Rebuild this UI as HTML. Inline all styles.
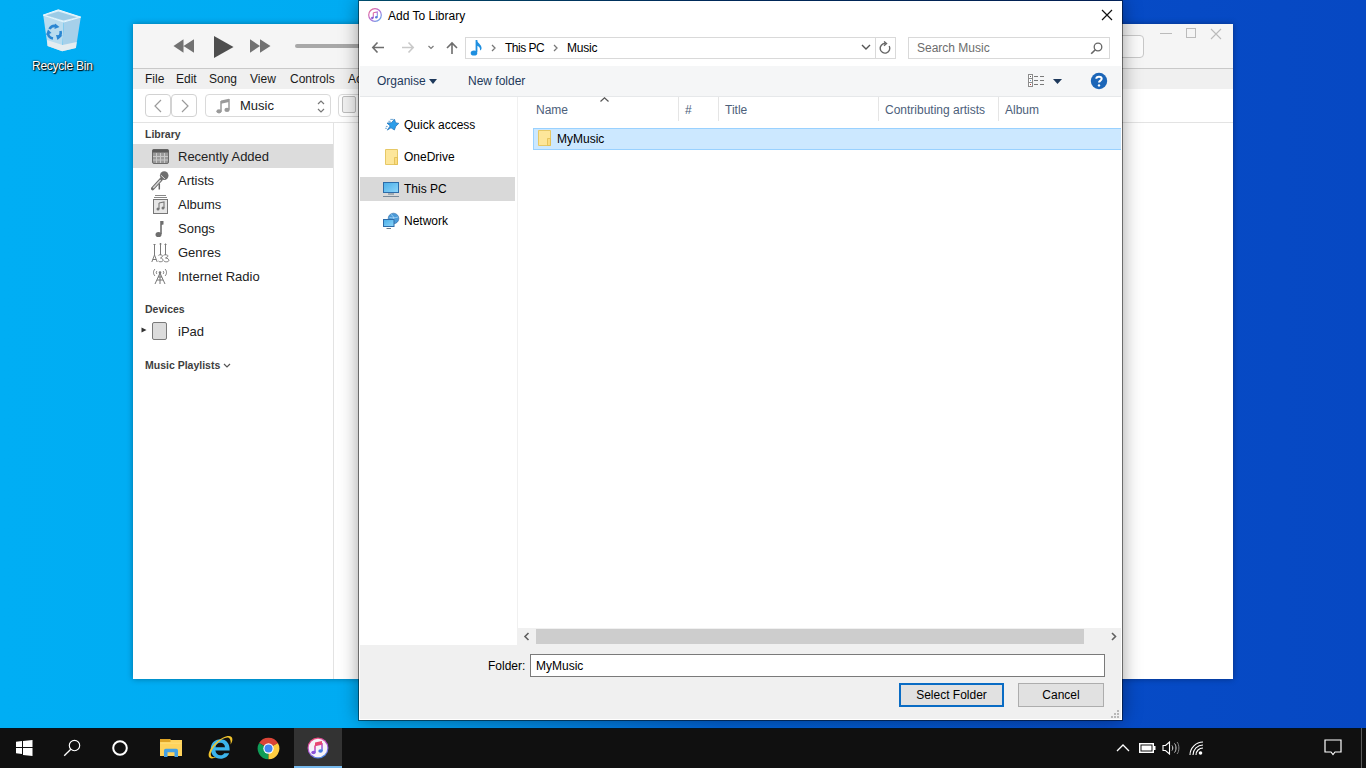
<!DOCTYPE html>
<html><head><meta charset="utf-8">
<style>
*{margin:0;padding:0;box-sizing:border-box}
html,body{width:1366px;height:768px;overflow:hidden}
body{position:relative;font-family:"Liberation Sans",sans-serif;font-size:12px;color:#000;
background:linear-gradient(90deg,#00aef4 0px,#00abf2 365px,#0062d4 720px,#064bc6 1110px,#0648c3 1366px)}
.a{position:absolute}
.t{position:absolute;white-space:nowrap;line-height:16px}
/* itunes */
#it{left:133px;top:24px;width:1100px;height:655px;background:#fff;box-shadow:0 0 6px rgba(0,0,0,.35)}
#dsh{left:359px;top:1px;width:763px;height:719px;background:#f0f0f0;box-shadow:0 0 0 1px rgba(0,0,0,.48),0 0 18px rgba(0,0,0,.4)}
#dlg{left:358px;top:0;width:765px;height:721px}
#tb{left:0;top:728px;width:1366px;height:40px;background:#101010}
</style></head><body>

<!-- recycle bin -->
<svg class="a" style="left:40px;top:8px" width="44" height="46" viewBox="40 8 44 46">
 <path d="M43.2 15.1L47.6 45.9L62.2 51.3L63.7 22Z" fill="#b9dcef"/>
 <path d="M63.7 22L62.2 51.3L75.9 47.9L80.8 17.1Z" fill="#a6d0ea"/>
 <path d="M47 40L47.6 45.9L62.2 51.3L75.9 47.9L76.7 42L62.5 45Z" fill="#e4ecf0"/>
 <path d="M43.2 15.1L58.3 9.8L80.8 17.1L63.7 22Z" fill="#d8eef9" stroke="#eaf7fd" stroke-width="1"/>
 <path d="M46 15.3L58.3 11.5L77 17.2L63.5 20.5Z" fill="#9ccbe6"/>
 <g fill="none" stroke="#2a86d2" stroke-width="2.6">
  <path d="M49.5 29A6 6 0 0 1 56 26"/>
  <path d="M60.5 31A6 6 0 0 1 58 37.5"/>
  <path d="M53 38.5A6 6 0 0 1 48 33"/>
 </g>
 <g fill="#2a86d2">
  <path d="M55 23.5L59.5 27L54.5 29Z"/>
  <path d="M62.5 35.5L57.5 40L56 35Z"/>
  <path d="M46 35L48 29.5L51.5 33Z"/>
 </g>
</svg>
<div class="t" style="left:32px;top:58px;letter-spacing:-0.25px;color:#fff;text-shadow:0 0 2px #000,1px 1px 1px #000">Recycle Bin</div>

<!-- iTunes window -->
<div id="it" class="a">
 <div class="a" style="left:0;top:0;width:1100px;height:45px;background:#f5f5f5;border-bottom:1px solid #c9c9c9"></div>
 <div class="a" style="left:0;top:45px;width:1100px;height:20px;background:#f0f0f0"></div>
 <div class="a" style="left:0;top:98px;width:1100px;height:1px;background:#e3e3e3"></div>
 <div class="a" style="left:200px;top:99px;width:1px;height:556px;background:#e3e3e3"></div>
 <!-- transport -->
 <svg class="a" style="left:40px;top:10px" width="100" height="26" viewBox="0 0 100 26">
  <path d="M10.5 12 L21 5.3 L21 18.7 Z M0.5 12 L10.5 5.3 L10.5 18.7 Z" fill="#727272"/>
  <path d="M41 2 L60.5 13 L41 24 Z" fill="#4e4e4e"/>
  <path d="M77 5.3 L87 12 L77 18.7 Z M87 5.3 L97.5 12 L87 18.7 Z" fill="#727272"/>
 </svg>
 <div class="a" style="left:162px;top:20px;width:80px;height:4px;border-radius:2px;background:#a8a8a8"></div>
 <!-- window controls -->
 <div class="a" style="left:1027px;top:9px;width:12px;height:1px;background:#bbb"></div>
 <div class="a" style="left:1053px;top:4px;width:10px;height:10px;border:1px solid #bbb"></div>
 <svg class="a" style="left:1077px;top:4px" width="12" height="12" viewBox="0 0 12 12"><path d="M1 1L11 11M11 1L1 11" stroke="#bbb" stroke-width="1.1"/></svg>
 <div class="a" style="left:940px;top:11px;width:71px;height:23px;border:1px solid #c8c8c8;border-radius:4px;background:#fbfbfb"></div>
 <!-- menu -->
 <div class="t" style="left:12px;top:47px;font-size:12px;color:#1a1a1a">File</div>
 <div class="t" style="left:43px;top:47px;font-size:12px;color:#1a1a1a">Edit</div>
 <div class="t" style="left:76px;top:47px;font-size:12px;color:#1a1a1a">Song</div>
 <div class="t" style="left:117px;top:47px;font-size:12px;color:#1a1a1a">View</div>
 <div class="t" style="left:157px;top:47px;font-size:12px;color:#1a1a1a">Controls</div>
 <div class="t" style="left:215px;top:47px;font-size:12px;color:#1a1a1a">Account</div>
 <!-- toolbar -->
 <div class="a" style="left:12px;top:70px;width:26px;height:23px;border:1px solid #d2d2d2;border-radius:4px;background:#fff"></div>
 <div class="a" style="left:38px;top:70px;width:26px;height:23px;border:1px solid #d2d2d2;border-radius:4px;background:#fff"></div>
 <svg class="a" style="left:20px;top:75px" width="50" height="14" viewBox="0 0 50 14"><path d="M8 1L2 7L8 13" fill="none" stroke="#9a9a9a" stroke-width="1.2"/><path d="M29 1L35 7L29 13" fill="none" stroke="#9a9a9a" stroke-width="1.2"/></svg>
 <div class="a" style="left:72px;top:70px;width:126px;height:23px;border:1px solid #dadada;border-radius:4px;background:#fff"></div>
 <svg class="a" style="left:83px;top:74px" width="14" height="16" viewBox="0 0 14 16"><path d="M5 2.5 L13 0.8 V4 L5 5.7Z" fill="#9a9a9a"/><path d="M5 3 V13.2 M13 1 V11.8" stroke="#9a9a9a" stroke-width="1.5"/><ellipse cx="3" cy="13.3" rx="2.6" ry="2.1" fill="#9a9a9a"/><ellipse cx="11" cy="11.9" rx="2.6" ry="2.1" fill="#9a9a9a"/></svg>
 <div class="t" style="left:107px;top:74px;font-size:13px;color:#222">Music</div>
 <svg class="a" style="left:184px;top:75px" width="8" height="15" viewBox="0 0 8 15"><path d="M1 5L4 2L7 5M1 10L4 13L7 10" fill="none" stroke="#777" stroke-width="1.2"/></svg>
 <div class="a" style="left:205px;top:70px;width:30px;height:23px;border:1px solid #dadada;border-radius:4px;background:#fff"></div>
 <div class="a" style="left:209px;top:72px;width:14px;height:17px;border:1px solid #bdbdbd;border-radius:2px;background:#f2f2f2"></div>
 <!-- sidebar -->
 <div class="t" style="left:12px;top:102px;font-size:10.5px;font-weight:bold;color:#3e3e3e">Library</div>
 <div class="a" style="left:0;top:120px;width:200px;height:24px;background:#dcdcdc"></div>
 <div class="t" style="left:45px;top:125px;font-size:13px;color:#222">Recently Added</div>
 <div class="t" style="left:45px;top:149px;font-size:13px;color:#222">Artists</div>
 <div class="t" style="left:45px;top:173px;font-size:13px;color:#222">Albums</div>
 <div class="t" style="left:45px;top:197px;font-size:13px;color:#222">Songs</div>
 <div class="t" style="left:45px;top:221px;font-size:13px;color:#222">Genres</div>
 <div class="t" style="left:45px;top:245px;font-size:13px;color:#222">Internet Radio</div>
 <div class="t" style="left:12px;top:277px;font-size:10.5px;font-weight:bold;color:#3e3e3e">Devices</div>
 <div class="t" style="left:45px;top:300px;font-size:13px;color:#222">iPad</div>
 <div class="t" style="left:12px;top:333px;font-size:10.5px;font-weight:bold;color:#3e3e3e">Music Playlists</div>
 <!-- sidebar icons -->
 <svg class="a" style="left:19px;top:125px" width="17" height="15" viewBox="0 0 17 15">
  <rect x="0.5" y="0.5" width="16" height="14" rx="1.5" fill="#9a9a9a" stroke="#6a6a6a"/>
  <rect x="0.5" y="0.5" width="16" height="3" fill="#5a5a5a"/>
  <path d="M1 7.5H16M1 11H16M4.5 4V14M8.5 4V14M12.5 4V14" stroke="#c8c8c8" stroke-width="1"/>
 </svg>
 <svg class="a" style="left:18px;top:144px" width="19" height="23" viewBox="0 0 19 23">
  <path d="M8.3 15.5V21.5" stroke="#6a6a6a" stroke-width="1.5"/>
  <path d="M10 11.5L1.6 20.6" stroke="#6e6e6e" stroke-width="3.4" stroke-linecap="round"/>
  <path d="M9.6 12L2.2 20" stroke="#d8d8d8" stroke-width="1.4"/>
  <circle cx="13.2" cy="7.6" r="4.3" fill="#6e6e6e"/>
  <path d="M9.8 7.1L13.9 10.9" stroke="#e8e8e8" stroke-width="0.9"/>
 </svg>
 <svg class="a" style="left:20px;top:170px" width="15" height="20" viewBox="0 0 15 20">
  <path d="M2 1.5H13M1 3.5H14" stroke="#888" stroke-width="1"/>
  <rect x="0.5" y="5.5" width="14" height="14" fill="#e6e6e6" stroke="#777"/>
  <path d="M6 9L11 8V14" fill="none" stroke="#777" stroke-width="1.1"/><path d="M6 9V15" stroke="#777" stroke-width="1.1"/>
  <circle cx="5" cy="15" r="1.5" fill="#777"/><circle cx="10" cy="14" r="1.5" fill="#777"/>
 </svg>
 <svg class="a" style="left:21px;top:196px" width="10" height="18" viewBox="0 0 10 18">
  <path d="M7 1V14" stroke="#6e6e6e" stroke-width="1.6"/>
  <path d="M7 1H9.5V4.5L7 5Z" fill="#6e6e6e"/>
  <ellipse cx="4.5" cy="14.5" rx="3" ry="2.6" fill="#6e6e6e"/>
 </svg>
 <svg class="a" style="left:18px;top:219px" width="19" height="20" viewBox="0 0 19 20">
  <g stroke="#7a7a7a" stroke-width="1" fill="none">
  <path d="M3.5 1V12M9.5 0V12M14.5 0.5V12"/>
  <path d="M2.5 1.5H4.5M8.5 1H10.5M13.5 1.5H15.5"/>
  <path d="M0.8 19L3.5 12L6.2 19M1.8 16.5H5.2"/>
  <path d="M7.5 12.5C7.5 11.5 11.5 11.5 11.5 13C11.5 14 10 14.5 9.5 15C11.5 15 12 16.5 12 17.5C12 19 7.5 19.2 7.5 17.8"/>
  <path d="M12.5 12.5C12.5 11.5 17 11.5 17 13C17 14 15 14.5 14.5 15C17 15 17.8 16.5 17.8 17.5C17.8 19.2 13 19.2 13 17.8"/>
  </g>
 </svg>
 <svg class="a" style="left:19px;top:243px" width="16" height="18" viewBox="0 0 16 18">
  <g stroke="#777" stroke-width="1" fill="none">
  <path d="M3 2C1 4 1 7 3 9M13 2C15 4 15 7 13 9M5 4C4 5 4 6 5 7M11 4C12 5 12 6 11 7"/>
  <path d="M8 5V17M8 6L3 17M8 6L13 17M5 13H11M6 10H10"/>
  </g>
  <circle cx="8" cy="5.5" r="1.3" fill="#777"/>
 </svg>
 <svg class="a" style="left:8px;top:303px" width="6" height="6" viewBox="0 0 6 6"><path d="M0.5 0.5L5.5 3L0.5 5.5Z" fill="#333"/></svg>
 <div class="a" style="left:19px;top:298px;width:15px;height:18px;border:1px solid #7a7a7a;border-radius:2px;background:#dcdcdc"></div>
 <svg class="a" style="left:90px;top:339px" width="8" height="6" viewBox="0 0 8 6"><path d="M1 1L4 4L7 1" fill="none" stroke="#555" stroke-width="1.2"/></svg>
</div>

<!-- dialog -->
<div id="dsh" class="a"></div>
<div id="dlg" class="a">
 <!-- white top area -->
 <div class="a" style="left:1px;top:1px;width:763px;height:65px;background:#fff"></div>
 <!-- title -->
 <svg class="a" style="left:10px;top:8px" width="14" height="14" viewBox="0 0 14 14">
  <defs><linearGradient id="ig" x1="0" y1="0" x2="1" y2="1"><stop offset="0" stop-color="#f06a8a"/><stop offset="0.5" stop-color="#b36ad8"/><stop offset="1" stop-color="#58b4ea"/></linearGradient></defs>
  <circle cx="7" cy="7" r="6.3" fill="#fff" stroke="url(#ig)" stroke-width="1.2"/>
  <path d="M5.3 4.8L9.3 3.9V9.2M5.3 4.8V10" fill="none" stroke="url(#ig)" stroke-width="1.1"/>
  <circle cx="4.3" cy="10" r="1.2" fill="#8a5ad0"/><circle cx="8.3" cy="9.2" r="1.2" fill="#5a7ad8"/>
 </svg>
 <div class="t" style="left:30px;top:8px;font-size:12px;color:#000">Add To Library</div>
 <svg class="a" style="left:743px;top:9px" width="12" height="12" viewBox="0 0 12 12"><path d="M1 1L11 11M11 1L1 11" stroke="#111" stroke-width="1.2"/></svg>
 <!-- nav -->
 <svg class="a" style="left:13px;top:40px" width="100" height="14" viewBox="0 0 100 14">
  <path d="M1.8 7.5H13M6.5 2.5L1.8 7.5L6.5 12.5" fill="none" stroke="#6d6d6d" stroke-width="1.6"/>
  <path d="M31 7.5H42.2M37.5 2.5L42.2 7.5L37.5 12.5" fill="none" stroke="#c9c9c9" stroke-width="1.6"/>
  <path d="M57.5 6L60 8.5L62.5 6" fill="none" stroke="#7a7a7a" stroke-width="1.2"/>
  <path d="M81 3V14M76 8L81 3L86 8" fill="none" stroke="#6d6d6d" stroke-width="1.6"/>
 </svg>
 <div class="a" style="left:107px;top:37px;width:431px;height:22px;border:1px solid #d9d9d9;background:#fff"></div>
 <div class="a" style="left:517px;top:38px;width:1px;height:20px;background:#d9d9d9"></div>
 <svg class="a" style="left:112px;top:39px" width="14" height="18" viewBox="0 0 14 18">
  <path d="M6.5 1V13" stroke="#1e8fe0" stroke-width="1.8"/>
  <path d="M6.5 1C7.5 4 11 5 11.5 8.5C11.8 10 11 11 10 11.5C10.5 9 9 7 6.5 6.5Z" fill="#1e8fe0"/>
  <ellipse cx="4" cy="14" rx="3.3" ry="2.6" fill="#1e8fe0"/>
 </svg>
 <svg class="a" style="left:133px;top:44px" width="200" height="8" viewBox="0 0 200 8"><path d="M1 1L4 4L1 7M63 1L66 4L63 7" fill="none" stroke="#777" stroke-width="1.3"/></svg>
 <div class="t" style="left:147px;top:40px;font-size:12px;color:#000;letter-spacing:-0.5px">This PC</div>
 <div class="t" style="left:209px;top:40px;font-size:12px;color:#000;letter-spacing:-0.2px">Music</div>
 <svg class="a" style="left:503px;top:44px" width="10" height="7" viewBox="0 0 10 7"><path d="M1 1L5 5L9 1" fill="none" stroke="#555" stroke-width="1.4"/></svg>
 <svg class="a" style="left:520px;top:41px" width="14" height="14" viewBox="0 0 14 14"><path d="M7 2.5A4.8 4.8 0 1 0 11.2 5" fill="none" stroke="#666" stroke-width="1.4"/><path d="M6 0.5L8.5 2.6L6 4.8" fill="none" stroke="#666" stroke-width="1.4"/></svg>
 <div class="a" style="left:550px;top:37px;width:202px;height:22px;border:1px solid #d9d9d9;background:#fff"></div>
 <div class="t" style="left:559px;top:40px;font-size:12px;color:#6d6d6d">Search Music</div>
 <svg class="a" style="left:732px;top:42px" width="13" height="13" viewBox="0 0 13 13"><circle cx="8" cy="5" r="3.8" fill="none" stroke="#666" stroke-width="1.3"/><path d="M5.3 7.7L1.2 11.8" stroke="#666" stroke-width="1.6"/></svg>
 <!-- command bar -->
 <div class="a" style="left:2px;top:66px;width:761px;height:30px;background:#f5f6f7"></div>
 <div class="a" style="left:2px;top:96px;width:761px;height:1px;background:#e6e8ea"></div>
 <div class="t" style="left:19px;top:73px;font-size:12px;color:#1e395b">Organise</div>
 <svg class="a" style="left:71px;top:79px" width="8" height="5" viewBox="0 0 8 5"><path d="M0 0H8L4 5Z" fill="#1e395b"/></svg>
 <div class="t" style="left:110px;top:73px;font-size:12px;color:#1e395b">New folder</div>
 <svg class="a" style="left:669px;top:73px" width="19" height="15" viewBox="0 0 19 15">
  <rect x="1.5" y="1.5" width="4" height="12" fill="#fff" stroke="#8c8c8c"/>
  <path d="M1.5 5.5H5.5M1.5 9.5H5.5" stroke="#8c8c8c"/>
  <rect x="3" y="3" width="1" height="1" fill="#555"/><rect x="3" y="7" width="1" height="1" fill="#6a9ac8"/><rect x="3" y="11" width="1" height="1" fill="#b04040"/>
  <path d="M7 3.5H11M13 3.5H17M7 7.5H11M13 7.5H17M7 11.5H11M13 11.5H17" stroke="#7a7a7a" stroke-width="1.1"/>
 </svg>
 <svg class="a" style="left:695px;top:79px" width="9" height="5" viewBox="0 0 9 5"><path d="M0 0H9L4.5 5Z" fill="#1e395b"/></svg>
 <svg class="a" style="left:732px;top:72px" width="18" height="18" viewBox="0 0 18 18"><circle cx="9" cy="9" r="8.2" fill="#1c66b8"/><path d="M6.3 6.8C6.3 4.2 11.7 4.2 11.7 6.8C11.7 8.6 9 8.6 9 10.6" fill="none" stroke="#fff" stroke-width="2"/><circle cx="9" cy="13.4" r="1.2" fill="#fff"/></svg>
 <!-- nav pane -->
 <div class="a" style="left:1px;top:97px;width:158px;height:548px;background:#fff"></div>
 <div class="a" style="left:1px;top:177px;width:156px;height:24px;background:#d9d9d9"></div>
 <div class="t" style="left:46px;top:117px;font-size:12px;color:#000">Quick access</div>
 <div class="t" style="left:46px;top:149px;font-size:12px;color:#000">OneDrive</div>
 <div class="t" style="left:46px;top:181px;font-size:12px;color:#000">This PC</div>
 <div class="t" style="left:46px;top:213px;font-size:12px;color:#000">Network</div>
 <svg class="a" style="left:22px;top:112px" width="24" height="24" viewBox="380 112 24 24">
  <path d="M394.5 119.3L395.6 122.7L398.8 123.4L395.8 126.2L394.4 130L391 127.8L387.3 130.1L390.2 125.9L387 123.1L391.4 122.7Z" fill="#2c9de9" stroke="#1d6fb8" stroke-width="0.7" stroke-linejoin="round"/>
  <path d="M390.3 119.4H393.6M388.4 121.3H390.6M385.9 126.4H387.6M385.2 128.3H386.9" stroke="#4a90c8" stroke-width="0.8"/>
 </svg>
 <svg class="a" style="left:27px;top:149px" width="14" height="17" viewBox="0 0 14 17"><path d="M0.5 0.5H12.5V15.5H0.5Z" fill="#fde69a" stroke="#e6c866"/><path d="M9.5 8.5H12.5V15.5H9.5Z" fill="#fbdc80" stroke="#e0bc50" stroke-width="0.8"/></svg>
 <svg class="a" style="left:24px;top:181px" width="18" height="17" viewBox="0 0 18 17">
  <defs><linearGradient id="scr" x1="0" y1="0" x2="1" y2="1"><stop offset="0" stop-color="#4aaee8"/><stop offset="1" stop-color="#8ed6fa"/></linearGradient></defs>
  <rect x="1.5" y="1.5" width="15" height="10" fill="url(#scr)" stroke="#2d6ca8"/>
  <path d="M6 13H12" stroke="#6a7a88" stroke-width="1"/><path d="M1 15.5H17" stroke="#7a8a98" stroke-width="1"/>
 </svg>
 <svg class="a" style="left:24px;top:212px" width="18" height="18" viewBox="0 0 18 18">
  <circle cx="11.5" cy="6.5" r="5.3" fill="#4a9ad8" stroke="#2d6ca8" stroke-width="0.6"/>
  <path d="M9 2.5C11 3.5 12.5 5.5 11.5 9.5M7.5 5.5C9.5 6 13 6 16 5" stroke="#b8e0fa" stroke-width="0.7" fill="none"/>
  <rect x="1.5" y="7.5" width="10.5" height="7" fill="url(#scr)" stroke="#2d6ca8"/>
  <path d="M4.5 16.5H9" stroke="#6a7a88" stroke-width="1"/>
 </svg>
 <div class="a" style="left:159px;top:97px;width:1px;height:548px;background:#f0f0f0"></div>
 <!-- content -->
 <div class="a" style="left:160px;top:97px;width:603px;height:531px;background:#fff"></div>
 <div class="t" style="left:178px;top:102px;font-size:12px;color:#4c607a">Name</div>
 <svg class="a" style="left:242px;top:97px" width="9" height="5" viewBox="0 0 9 5"><path d="M0.5 4.5L4.5 0.8L8.5 4.5" fill="none" stroke="#555" stroke-width="1.2"/></svg>
 <div class="a" style="left:320px;top:97px;width:1px;height:24px;background:#e5e5e5"></div>
 <div class="t" style="left:327px;top:102px;font-size:12px;color:#4c607a">#</div>
 <div class="a" style="left:360px;top:97px;width:1px;height:24px;background:#e5e5e5"></div>
 <div class="t" style="left:367px;top:102px;font-size:12px;color:#4c607a">Title</div>
 <div class="a" style="left:520px;top:97px;width:1px;height:24px;background:#e5e5e5"></div>
 <div class="t" style="left:527px;top:102px;font-size:12px;color:#4c607a">Contributing artists</div>
 <div class="a" style="left:640px;top:97px;width:1px;height:24px;background:#e5e5e5"></div>
 <div class="t" style="left:647px;top:102px;font-size:12px;color:#4c607a">Album</div>
 <div class="a" style="left:175px;top:128px;width:588px;height:22px;background:#cce8ff;border:1px solid #99d1ff;border-right:0"></div>
 <svg class="a" style="left:180px;top:130px" width="14" height="17" viewBox="0 0 14 17"><path d="M0.5 0.5H12.5V15.5H0.5Z" fill="#fde69a" stroke="#e6c866"/><path d="M9.5 8.5H12.5V15.5H9.5Z" fill="#fbdc80" stroke="#e0bc50" stroke-width="0.8"/></svg>
 <div class="t" style="left:199px;top:131px;font-size:12px;color:#000">MyMusic</div>
 <!-- hscroll -->
 <div class="a" style="left:160px;top:628px;width:603px;height:17px;background:#f0f0f0"></div>
 <div class="a" style="left:178px;top:629px;width:548px;height:15px;background:#cdcdcd"></div>
 <svg class="a" style="left:165px;top:632px" width="8" height="9" viewBox="0 0 8 9"><path d="M5.5 1L2 4.5L5.5 8" fill="none" stroke="#606060" stroke-width="1.6"/></svg>
 <svg class="a" style="left:752px;top:632px" width="8" height="9" viewBox="0 0 8 9"><path d="M2 1L5.5 4.5L2 8" fill="none" stroke="#606060" stroke-width="1.6"/></svg>
 <!-- bottom -->
 <div class="t" style="left:130px;top:658px;font-size:12px;color:#000">Folder:</div>
 <div class="a" style="left:172px;top:654px;width:575px;height:23px;border:1px solid #7a7a7a;background:#fff"></div>
 <div class="t" style="left:178px;top:658px;font-size:12px;color:#000">MyMusic</div>
 <div class="a" style="left:541px;top:683px;width:105px;height:24px;border:2px solid #0a6cc4;background:#e1e1e1"></div>
 <div class="t" style="left:541px;top:687px;width:105px;text-align:center;font-size:12px;color:#000">Select Folder</div>
 <div class="a" style="left:660px;top:683px;width:86px;height:24px;border:1px solid #adadad;background:#e1e1e1"></div>
 <div class="t" style="left:660px;top:687px;width:86px;text-align:center;font-size:12px;color:#000">Cancel</div>
 <svg class="a" style="left:752px;top:709px" width="10" height="10" viewBox="0 0 10 10"><g fill="#b8b8b8"><rect x="7" y="1" width="2" height="2"/><rect x="4" y="4" width="2" height="2"/><rect x="7" y="4" width="2" height="2"/><rect x="1" y="7" width="2" height="2"/><rect x="4" y="7" width="2" height="2"/><rect x="7" y="7" width="2" height="2"/></g></svg>
 <div class="a" style="left:763px;top:1px;width:1px;height:719px;background:#fff"></div>
 <div class="a" style="left:1px;top:719px;width:763px;height:1px;background:#fff"></div>
 <div class="a" style="left:1px;top:66px;width:1px;height:654px;background:#fff"></div>
</div>

<!-- taskbar -->
<div id="tb" class="a">
 <div class="a" style="left:0;top:0;width:1366px;height:1px;background:#02121e"></div>
 <svg class="a" style="left:16px;top:12px" width="17" height="16" viewBox="0 0 17 16"><path d="M0 1.8L6 1.1V7H0Z M7 1L16.5 0V7H7Z M0 8H6V14L0 13.3Z M7 8H16.5V16L7 15Z" fill="#fff"/></svg>
 <svg class="a" style="left:63px;top:11px" width="18" height="18" viewBox="0 0 18 18"><circle cx="11.5" cy="6.5" r="5.2" fill="none" stroke="#fff" stroke-width="1.15"/><path d="M7.8 10.2L1.2 16.8" stroke="#fff" stroke-width="1.3"/></svg>
 <svg class="a" style="left:111px;top:11px" width="18" height="18" viewBox="0 0 18 18"><circle cx="9" cy="9" r="6.8" fill="none" stroke="#fff" stroke-width="2"/></svg>
 <svg class="a" style="left:159px;top:10px" width="24" height="20" viewBox="159 738 24 20">
  <path d="M160 739H170L171 740H182V756H160Z" fill="#ffd35c"/>
  <path d="M160 739H169.5L170.5 740.5V742H160Z" fill="#e0a526"/>
  <path d="M160.5 742.5H181.5V744H160.5Z" fill="#ffe07a" opacity=".6"/>
  <path d="M164 757V750.5Q164 748.8 165.7 748.8H176.3Q178 748.8 178 750.5V757H174.5V752.2H167.5V757Z" fill="#44a0e4"/>
 </svg>
 <svg class="a" style="left:207px;top:7px" width="26" height="25" viewBox="0 0 26 25">
  <g transform="translate(13.5 14) scale(1.22) translate(-12.5 -14)">
  <path d="M12.5 6C7.5 6 4.5 9.5 4.5 14C4.5 18.5 7.8 22 12.5 22C16 22 18.5 20.2 19.6 17.5H15.5C14.8 18.7 13.8 19.2 12.5 19.2C10.4 19.2 8.6 17.8 8.3 15.3H20C20.3 9.8 17.5 6 12.5 6ZM8.4 12.5C8.8 10.3 10.4 8.9 12.4 8.9C14.5 8.9 16 10.3 16.2 12.5Z" fill="#3cb4ec"/>
  </g>
  <path d="M2.5 22.5C0 20 3 13 9 7.5C15 2 22 -0.5 24.5 2C26 3.5 25.5 6.5 23.5 9.5C24 6.5 23.5 4 22 3C19.5 1.5 14.5 4 10 8.5C5 13.5 2.5 19 4.5 21.5C5.5 22.5 7.5 22.5 9.5 21.8C6.8 23.5 4 24 2.5 22.5Z" fill="#f2c42c"/>
 </svg>
 <svg class="a" style="left:257px;top:9px" width="23" height="23" viewBox="0 0 24 24">
  <path d="M12 12L21.79 6.35A11.3 11.3 0 0 0 2.21 6.35Z" fill="#db4437"/>
  <path d="M12 12L2.21 6.35A11.3 11.3 0 0 0 12 23.3Z" fill="#0f9d58"/>
  <path d="M12 12L12 23.3A11.3 11.3 0 0 0 21.79 6.35Z" fill="#ffcd40"/>
  <path d="M12 7.2H21.3L20.4 5.5L12 6Z" fill="#db4437"/>
  <circle cx="12" cy="12" r="5.4" fill="#fff"/><circle cx="12" cy="12" r="4.2" fill="#4285f4"/>
 </svg>
 <div class="a" style="left:294px;top:0;width:48px;height:40px;background:#333"></div>
 <div class="a" style="left:294px;top:38px;width:48px;height:2px;background:#76b9ed"></div>
 <svg class="a" style="left:307px;top:9px" width="22" height="22" viewBox="0 0 22 22">
  <defs><linearGradient id="ig2" x1="0.3" y1="0" x2="0.7" y2="1"><stop offset="0" stop-color="#f4486e"/><stop offset="0.5" stop-color="#b054d8"/><stop offset="1" stop-color="#3e8ee8"/></linearGradient></defs>
  <circle cx="11" cy="11" r="10.5" fill="url(#ig2)"/><circle cx="11" cy="11" r="9.3" fill="#f6f4f8"/>
  <path d="M8 8.5L15 7V14M8 8.5V15.5" fill="none" stroke="url(#ig2)" stroke-width="1.6"/>
  <path d="M8 5.5L15 4V7L8 8.5Z" fill="#e84870"/>
  <ellipse cx="6.5" cy="15.5" rx="2.2" ry="1.8" fill="#8a52d8"/><ellipse cx="13.5" cy="14" rx="2.2" ry="1.8" fill="#4a7ae0"/>
 </svg>
 <svg class="a" style="left:1116px;top:15px" width="14" height="9" viewBox="0 0 14 9"><path d="M1 8L7 2L13 8" fill="none" stroke="#fff" stroke-width="1.3"/></svg>
 <svg class="a" style="left:1139px;top:15px" width="17" height="10" viewBox="0 0 17 10"><rect x="0.75" y="0.75" width="13.5" height="8.5" fill="none" stroke="#fff" stroke-width="1.5"/><rect x="2.5" y="2.5" width="10" height="5" fill="#fff"/><rect x="14.5" y="3" width="2" height="4" fill="#fff"/></svg>
 <svg class="a" style="left:1162px;top:13px" width="18" height="14" viewBox="0 0 18 14"><path d="M1 4.5H3.5L7.5 1V13L3.5 9.5H1Z" fill="none" stroke="#fff" stroke-width="1.1"/><path d="M10 4.5C11 5.5 11 8.5 10 9.5M12.5 2.5C14.5 4.5 14.5 9.5 12.5 11.5" fill="none" stroke="#ddd" stroke-width="1"/><path d="M15 1C17.5 3.5 17.5 10.5 15 13" fill="none" stroke="#888" stroke-width="1"/></svg>
 <svg class="a" style="left:1189px;top:13px" width="15" height="15" viewBox="0 0 15 15"><path d="M1 14C1 7 7 1 14 1M4 14C4 8.5 8.5 4 14 4M7 14C7 10 10 7 14 7" fill="none" stroke="#fff" stroke-width="1.1"/><circle cx="11.5" cy="12" r="1.8" fill="#fff"/></svg>
 <svg class="a" style="left:1324px;top:11px" width="18" height="18" viewBox="0 0 18 18"><path d="M1 1H17V13H11L9 15.5L7 13H1Z" fill="none" stroke="#fff" stroke-width="1.2"/></svg>
 <div class="a" style="left:1361px;top:0;width:1px;height:40px;background:#5a5a5a"></div>
</div>

</body></html>
